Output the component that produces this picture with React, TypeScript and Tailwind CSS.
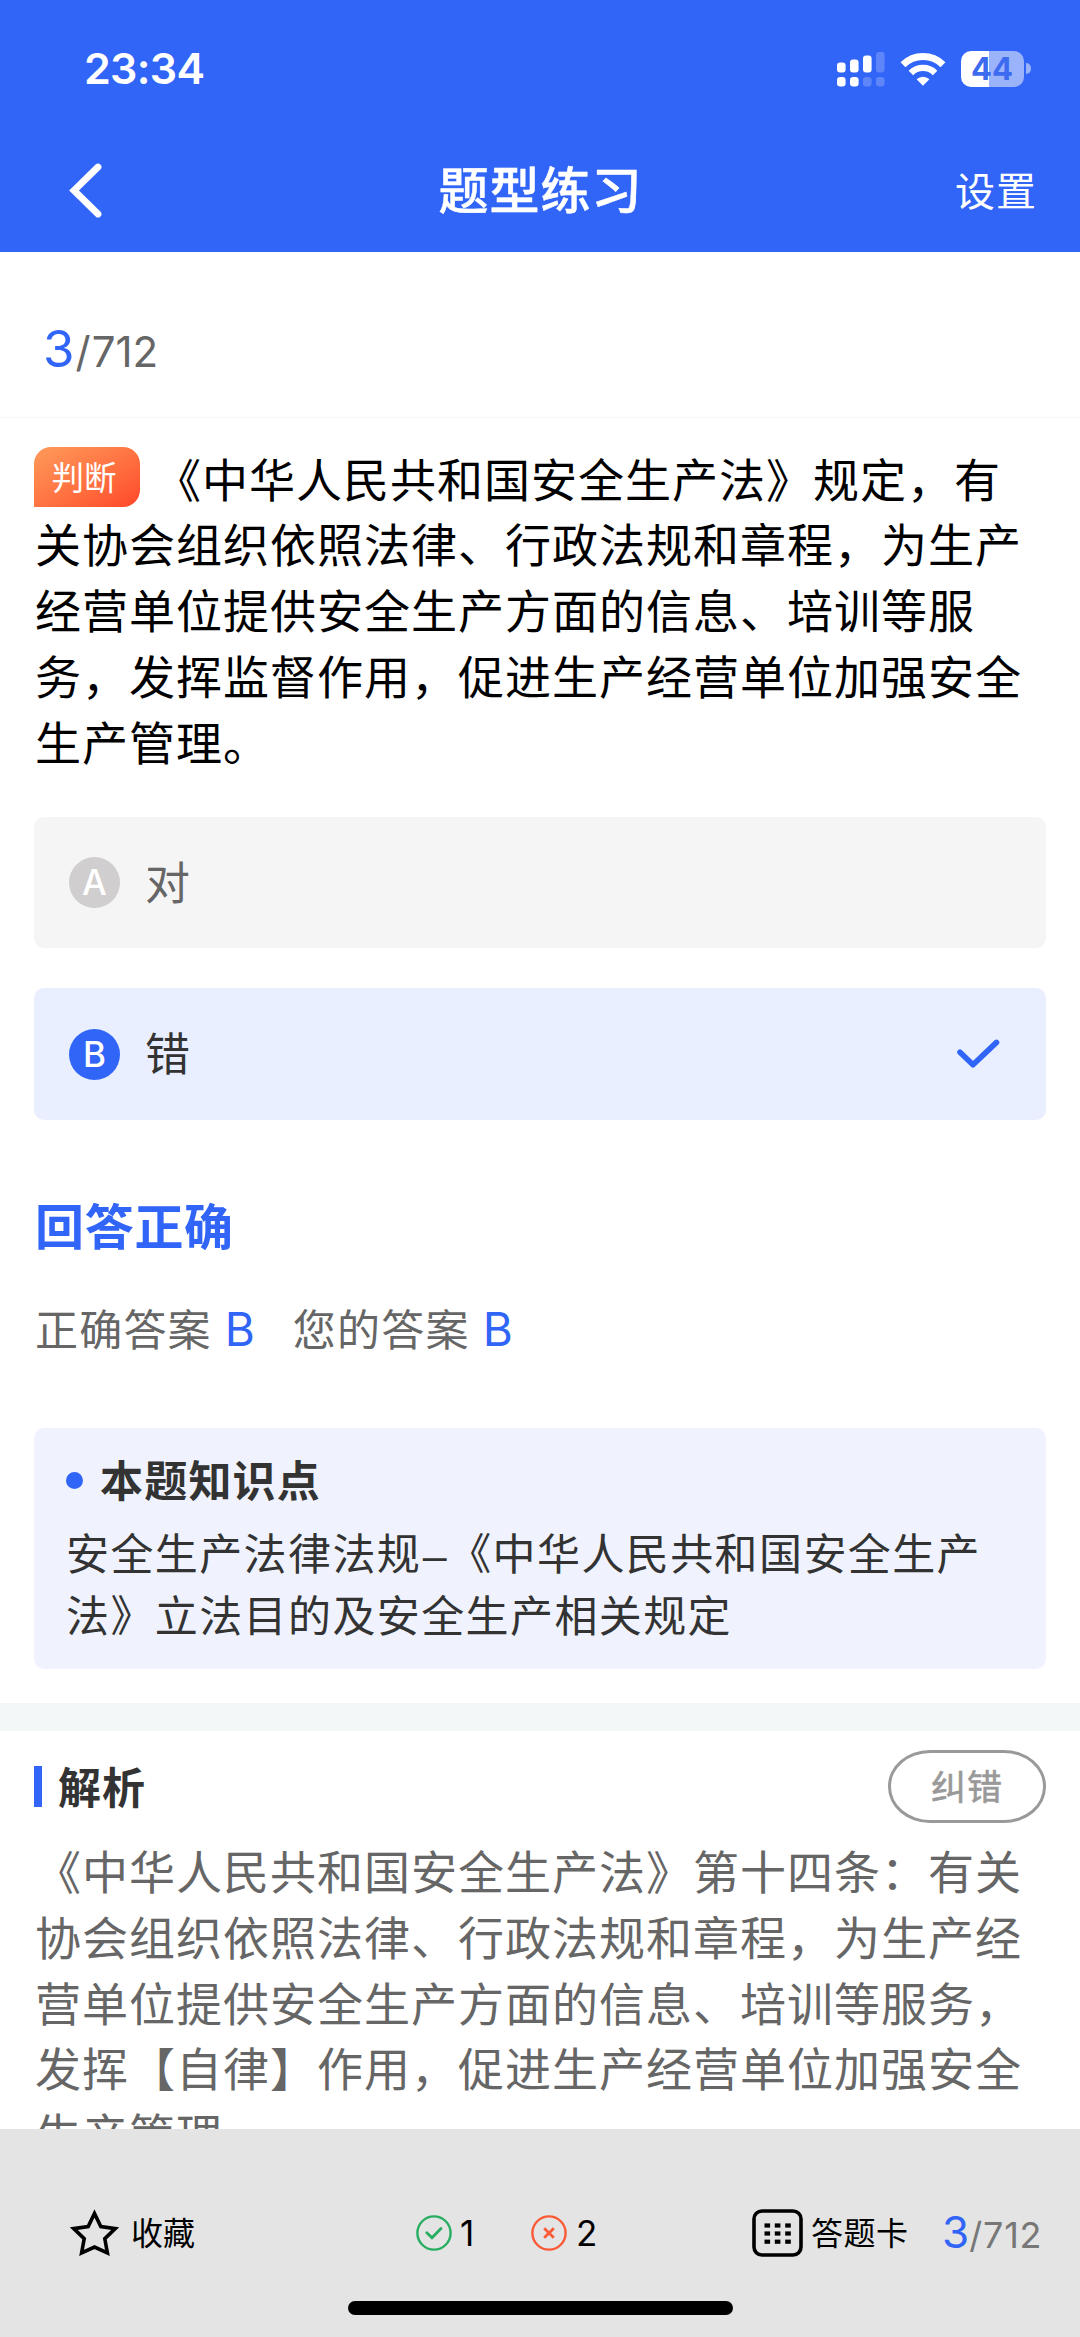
import React from "react";

const questionRest = [
  "关协会组织依照法律、行政法规和章程，为生产",
  "经营单位提供安全生产方面的信息、培训等服",
  "务，发挥监督作用，促进生产经营单位加强安全",
  "生产管理。",
];

const analysis = [
  "《中华人民共和国安全生产法》第十四条：有关",
  "协会组织依照法律、行政法规和章程，为生产经",
  "营单位提供安全生产方面的信息、培训等服务，",
  "发挥【自律】作用，促进生产经营单位加强安全",
  "生产管理。",
];

function SignalIcon() {
  return (
    <svg className="h-[36px] w-[48px]" viewBox="0 0 48 36" fill="#fff">
      <rect x="0" y="11.5" width="8.6" height="10" rx="3" />
      <rect x="13" y="8.5" width="8.6" height="13" rx="3" />
      <rect x="26" y="4.5" width="8.6" height="17" rx="3" />
      <rect x="39" y="1" width="8.6" height="20.5" rx="3" opacity="0.22" />
      <rect x="0" y="26" width="8.6" height="9.5" rx="3.2" />
      <rect x="13" y="26" width="8.6" height="9.5" rx="3.2" />
      <rect x="26" y="26" width="8.6" height="9.5" rx="3.2" opacity="0.22" />
      <rect x="39" y="26" width="8.6" height="9.5" rx="3.2" opacity="0.22" />
    </svg>
  );
}

function WifiIcon() {
  return (
    <svg className="h-[34px] w-[46px]" viewBox="0 0 46 34" fill="none" stroke="#fff">
      <path d="M3 12.7a28.5 28.5 0 0 1 40 0" strokeWidth="7" />
      <path d="M10.9 20.9a17.2 17.2 0 0 1 24.2 0" strokeWidth="6.4" />
      <path d="M16.6 27.2a9.4 9.4 0 0 1 12.8 0L23 33.8z" fill="#fff" stroke="none" />
    </svg>
  );
}

function Battery() {
  return (
    <div className="flex items-center gap-[2px]">
      <div className="flex h-[36px] w-[63px] items-center justify-center rounded-[10px] bg-[linear-gradient(90deg,#fff_0_44.5%,#9bb3fb_44.5%)] pr-px font-['Inter'] text-[31px] leading-none font-bold text-[#3c6bf0]">
        44
      </div>
      <div className="h-[11px] w-[5px] rounded-r-full bg-[#9bb3fb]" />
    </div>
  );
}

function Option({ letter, label, selected }: { letter: string; label: string; selected?: boolean }) {
  return (
    <div
      className={
        "flex h-[131.5px] items-center rounded-[10px] pr-[46px] pl-[35px] " +
        (selected ? "bg-[#e9effe]" : "bg-[#f5f5f5]")
      }
    >
      <div
        className={
          "flex size-[51px] items-center justify-center rounded-full font-['Inter'] text-[35px] leading-none font-medium text-white " +
          (selected ? "bg-[#3165f8]" : "bg-[#d0cece]")
        }
      >
        {letter}
      </div>
      <div className={"-mt-[4px] ml-[25px] flex-1 text-[45px] leading-[60px] " + (selected ? "text-[#333]" : "text-[#666]")}>
        {label}
      </div>
      {selected && (
        <svg className="h-[30px] w-[44px]" viewBox="0 0 44 30" fill="none" stroke="#3165f8" strokeWidth="5.6" strokeLinecap="round" strokeLinejoin="round">
          <path d="M4 13.2L17 25.8L40.5 3.4" />
        </svg>
      )}
    </div>
  );
}

export default function App() {
  return (
    <div className="flex h-[2337px] w-[1080px] flex-col overflow-hidden bg-white font-['Noto_Sans_CJK_SC',sans-serif]">
      <header className="h-[252px] shrink-0 bg-[#3165f8] text-white">
        <div className="flex h-[137px] items-center justify-between pr-[49px] pl-[84px]">
          <div className="font-['Inter'] text-[43px] leading-none font-semibold tracking-[-0.7px]">23:34</div>
          <div className="flex items-center gap-[15px]">
            <SignalIcon />
            <WifiIcon />
            <Battery />
          </div>
        </div>
        <div className="grid h-[107px] grid-cols-3 items-center pr-[43px] pl-[69px]">
          <svg className="h-[55px] w-[34px]" viewBox="0 0 34 55" fill="none" stroke="#fff" strokeWidth="6.8">
            <path d="M29 4L5 27.5L29 51" strokeLinecap="round" />
          </svg>
          <div className="-mt-[8px] -ml-[25px] text-center text-[50px] leading-[60px] font-medium tracking-[1px] whitespace-nowrap [-webkit-text-stroke:0.5px_#fff]">
            题型练习
          </div>
          <div className="-mt-[4px] text-right text-[40px] leading-[60px] tracking-[1px]">设置</div>
        </div>
      </header>

      <div className="flex h-[166px] shrink-0 items-baseline border-b border-[#f6f6f6] pt-[67px] pl-[43px] font-['Inter'] leading-[60px]">
        <span className="text-[51px] text-[#3165f8]">3</span>
        <span className="mx-[1px] text-[42px] text-[#666]">/</span>
        <span className="text-[42px] text-[#666]">712</span>
      </div>

      <main className="h-[1711px] shrink-0 overflow-hidden">
        <section className="px-[34px] pt-[26.6px]">
          <div className="pl-px text-[46px] leading-[65.8px] tracking-[1px] whitespace-nowrap text-black">
            <div className="-ml-px flex h-[65.8px] items-center">
              <span className="mr-[15px] flex h-[60px] w-[106px] items-center justify-center rounded-[17px] rounded-bl-none bg-linear-to-br from-[#ff9a5a] to-[#ff4528] pr-[6px] pb-[3px] text-[32.5px] leading-none tracking-normal text-white">
                判断
              </span>
              <span>《中华人民共和国安全生产法》规定，有</span>
            </div>
            {questionRest.map((line) => (
              <div key={line}>{line}</div>
            ))}
          </div>

          <div className="mt-[43.4px] flex flex-col gap-[40px]">
            <Option letter="A" label="对" />
            <Option letter="B" label="错" selected />
          </div>

          <h2 className="mt-[74px] pl-px text-[49px] leading-[60px] font-bold tracking-[0.7px] text-[#3165f8]">回答正确</h2>
          <div className="mt-[43px] flex h-[60px] items-center pl-px text-[43px] leading-[60px] tracking-[1.2px] text-[#666]">
            <span>正确答案</span>
            <span className="mt-[5px] ml-[13px] w-[68px] font-['Inter'] text-[46px] text-[#3165f8]">B</span>
            <span>您的答案</span>
            <span className="mt-[5px] ml-[13px] font-['Inter'] text-[46px] text-[#3165f8]">B</span>
          </div>

          <div className="mt-[71px] h-[241px] rounded-[10px] bg-[#f0f3fe] pt-[20px] pl-[32px] text-[#333]">
            <div className="flex h-[60px] items-center">
              <span className="mt-[5px] size-[17px] rounded-full bg-[#3165f8]" />
              <span className="ml-[17px] text-[43px] leading-[60px] font-bold tracking-[1.2px]">本题知识点</span>
            </div>
            <div className="mt-[12px] text-[43px] leading-[62.2px] tracking-[1.4px] whitespace-nowrap">
              <div>
                安全生产法律法规
                <span className="inline-block w-[27px] text-center font-['Liberation_Sans'] leading-none tracking-normal">–</span>
                《中华人民共和国安全生产
              </div>
              <div>法》立法目的及安全生产相关规定</div>
            </div>
          </div>
        </section>

        <div className="mt-[34px] h-[28px] bg-[#f3f7f8]" />

        <section className="px-[34px] pt-[20px]">
          <div className="flex h-[72px] items-center">
            <span className="h-[41px] w-[8px] bg-[#3165f8]" />
            <h3 className="-mt-[4px] ml-[16px] flex-1 text-[43px] leading-[60px] font-bold tracking-[1px] text-[#333]">解析</h3>
            <button className="flex h-[73px] w-[158px] items-center justify-center rounded-[42px/36px] border-[3px] border-[#999] pb-[4px] text-[35px] leading-none tracking-[1px] text-[#999] [-webkit-text-stroke:0.6px_#999]">
              纠错
            </button>
          </div>
          <div className="mt-[14px] pl-px text-[46px] leading-[65.8px] tracking-[1px] whitespace-nowrap text-[#666]">
            {analysis.map((line) => (
              <div key={line}>{line}</div>
            ))}
          </div>
        </section>
      </main>

      <footer className="flex h-[208px] shrink-0 flex-col bg-[#e4e4e4] text-[32px] text-black">
        <div className="flex h-[172px] items-center pt-[36px] pl-[70px]">
          <svg className="h-[48px] w-[49px]" viewBox="0 0 49 48" fill="none" stroke="#000" strokeWidth="3.6">
            <path d="M24.5 4.5L30.8 17.6L45.2 19.6L34.8 29.7L37.4 44L24.5 38L11.6 44L14.2 29.7L3.8 19.6L18.2 17.6Z" />
          </svg>
          <span className="-mt-[4px] ml-[12px] w-[285px] leading-[60px]">收藏</span>
          <svg className="size-[36px]" viewBox="0 0 36 36" fill="none" stroke="#27ae60" strokeWidth="2.4">
            <circle cx="18" cy="18" r="16.6" />
            <path d="M10.8 17.8L16 22.8L25 13.6" strokeWidth="2.8" strokeLinecap="round" />
          </svg>
          <span className="ml-[8px] w-[71px] font-['Inter'] text-[35px] leading-[60px]">1</span>
          <svg className="size-[36px]" viewBox="0 0 36 36" fill="none" stroke="#fb5a37" strokeWidth="2.4">
            <circle cx="18" cy="18" r="16.6" />
            <path d="M13.2 13.2L22.8 22.8M22.8 13.2L13.2 22.8" strokeWidth="2.8" />
          </svg>
          <span className="ml-[9px] w-[176px] font-['Inter'] text-[35px] leading-[60px]">2</span>
          <svg className="h-[48px] w-[51px]" viewBox="0 0 51 48" fill="#000">
            <rect x="2" y="2" width="47" height="44" rx="8" fill="none" stroke="#000" strokeWidth="3.6" />
            {[16.5, 24.5, 32.7].map((y) =>
              [15.3, 25.6, 36].map((x) => <rect key={`${x}-${y}`} x={x - 2.8} y={y - 2.1} width="5.6" height="4.2" />),
            )}
          </svg>
          <span className="-mt-[4px] ml-[8px] w-[131px] leading-[60px] tracking-[0.5px]">答题卡</span>
          <span className="flex items-baseline font-['Inter'] leading-[60px]">
            <span className="text-[44px] text-[#3165f8]">3</span>
            <span className="text-[36px] tracking-[0.8px] text-[#777]">/712</span>
          </span>
        </div>
        <div className="mx-auto h-[14px] w-[385px] rounded-full bg-black" />
      </footer>
    </div>
  );
}
